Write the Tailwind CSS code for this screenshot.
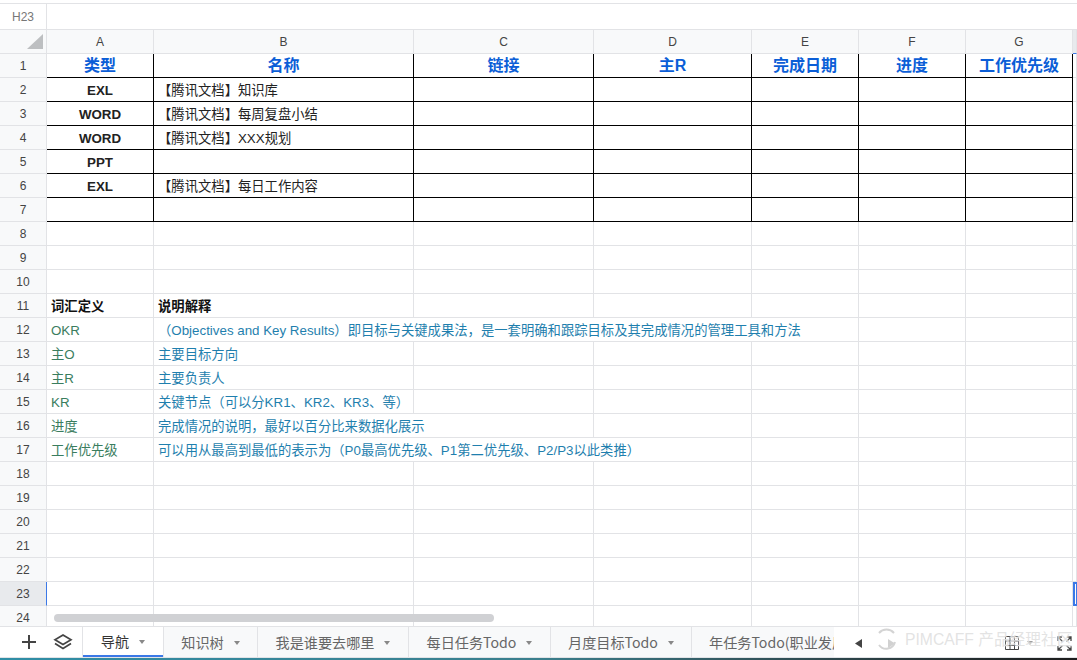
<!DOCTYPE html>
<html lang="zh">
<head>
<meta charset="utf-8">
<title>导航</title>
<script src="https://cdn.jsdelivr.net/npm/@tailwindcss/browser@4"></script>
</head>
<body class="bg-white">
<div class="relative w-[1077px] h-[660px] overflow-hidden flex flex-col text-[13.33px] text-[#222] font-['Liberation_Sans','Noto_Sans_CJK_SC',sans-serif]">
  <div class="h-[4px] shrink-0 border-b border-[#e2e3e6]"></div>
  <div class="h-[26px] shrink-0 flex border-b border-[#e2e3e6]">
    <div class="w-[47px] border-r border-[#e2e3e6] flex items-center justify-center text-[12px] text-[#777]">H23</div>
  </div>
  <div class="flex-1 min-h-0 overflow-hidden">
    <table class="table-fixed w-[1077px] border-separate border-spacing-0 [&_td]:h-[24px] [&_td]:pt-[2px] [&_td]:pb-0 [&_td]:leading-[20px] [&_td]:border-r [&_td]:border-b [&_td]:border-[#e2e3e6] [&_td]:whitespace-nowrap [&_td]:overflow-hidden">
      <colgroup>
        <col class="w-[47px]"><col class="w-[107px]"><col class="w-[260px]"><col class="w-[180px]"><col class="w-[158px]"><col class="w-[107px]"><col class="w-[107px]"><col class="w-[107px]"><col class="w-[4px]">
      </colgroup>
      <tbody class="[&_td:first-child]:pt-0 [&_td:first-child]:bg-[#f8f9fa] [&_td:first-child]:text-center [&_td:first-child]:text-[12px] [&_td:first-child]:text-[#444]">
        <tr class="bg-[#f8f9fa] text-center text-[12px] text-[#444] [&>td]:pt-0!">
          <td>
            <svg width="46" height="23" viewBox="0 0 46 23" class="block"><polygon points="43,4 43,19 27,19" fill="#bdbfc1"/></svg>
          </td>
          <td>A</td><td>B</td><td>C</td><td>D</td><td>E</td><td>F</td><td>G</td>
          <td class="bg-[#e8eaed] [border-bottom-color:#3b78e7]!"></td>
        </tr>
        <tr class="[&>td:not(:first-child,:last-child)]:border-black text-center text-[16px] font-bold text-[#0b5ed7] [&>td]:pt-0!">
          <td class="font-normal">1</td><td>类型</td><td>名称</td><td>链接</td><td>主R</td><td>完成日期</td><td>进度</td><td>工作优先级</td><td></td>
        </tr>
        <tr class="[&>td:not(:first-child,:last-child)]:border-black">
          <td>2</td><td class="text-center font-bold">EXL</td><td class="pl-[4px]">【腾讯文档】知识库</td><td></td><td></td><td></td><td></td><td></td><td></td>
        </tr>
        <tr class="[&>td:not(:first-child,:last-child)]:border-black">
          <td>3</td><td class="text-center font-bold">WORD</td><td class="pl-[4px]">【腾讯文档】每周复盘小结</td><td></td><td></td><td></td><td></td><td></td><td></td>
        </tr>
        <tr class="[&>td:not(:first-child,:last-child)]:border-black">
          <td>4</td><td class="text-center font-bold">WORD</td><td class="pl-[4px]">【腾讯文档】XXX规划</td><td></td><td></td><td></td><td></td><td></td><td></td>
        </tr>
        <tr class="[&>td:not(:first-child,:last-child)]:border-black">
          <td>5</td><td class="text-center font-bold">PPT</td><td></td><td></td><td></td><td></td><td></td><td></td><td></td>
        </tr>
        <tr class="[&>td:not(:first-child,:last-child)]:border-black">
          <td>6</td><td class="text-center font-bold">EXL</td><td class="pl-[4px]">【腾讯文档】每日工作内容</td><td></td><td></td><td></td><td></td><td></td><td></td>
        </tr>
        <tr class="[&>td:not(:first-child,:last-child)]:border-black">
          <td>7</td><td></td><td></td><td></td><td></td><td></td><td></td><td></td><td></td>
        </tr>
        <tr><td>8</td><td></td><td></td><td></td><td></td><td></td><td></td><td></td><td></td></tr>
        <tr><td>9</td><td></td><td></td><td></td><td></td><td></td><td></td><td></td><td></td></tr>
        <tr><td>10</td><td></td><td></td><td></td><td></td><td></td><td></td><td></td><td></td></tr>
        <tr class="font-bold text-[#111]">
          <td class="font-normal">11</td><td class="pl-[4px]">词汇定义</td><td class="pl-[4px]">说明解释</td><td></td><td></td><td></td><td></td><td></td><td></td>
        </tr>
        <tr>
          <td>12</td><td class="pl-[4px] text-[#3a7d5e]">OKR</td><td colspan="4" class="pl-[4px] text-[#1f7fae]">（Objectives and Key Results）即目标与关键成果法，是一套明确和跟踪目标及其完成情况的管理工具和方法</td><td></td><td></td><td></td>
        </tr>
        <tr>
          <td>13</td><td class="pl-[4px] text-[#3a7d5e]">主O</td><td class="pl-[4px] text-[#1f7fae]">主要目标方向</td><td></td><td></td><td></td><td></td><td></td><td></td>
        </tr>
        <tr>
          <td>14</td><td class="pl-[4px] text-[#3a7d5e]">主R</td><td class="pl-[4px] text-[#1f7fae]">主要负责人</td><td></td><td></td><td></td><td></td><td></td><td></td>
        </tr>
        <tr>
          <td>15</td><td class="pl-[4px] text-[#3a7d5e]">KR</td><td class="pl-[4px] text-[#1f7fae]">关键节点（可以分KR1、KR2、KR3、等）</td><td></td><td></td><td></td><td></td><td></td><td></td>
        </tr>
        <tr>
          <td>16</td><td class="pl-[4px] text-[#3a7d5e]">进度</td><td colspan="2" class="pl-[4px] text-[#1f7fae]">完成情况的说明，最好以百分比来数据化展示</td><td></td><td></td><td></td><td></td><td></td>
        </tr>
        <tr>
          <td>17</td><td class="pl-[4px] text-[#3a7d5e]">工作优先级</td><td colspan="3" class="pl-[4px] text-[#1f7fae]">可以用从最高到最低的表示为（P0最高优先级、P1第二优先级、P2/P3以此类推）</td><td></td><td></td><td></td><td></td>
        </tr>
        <tr><td>18</td><td></td><td></td><td></td><td></td><td></td><td></td><td></td><td></td></tr>
        <tr><td>19</td><td></td><td></td><td></td><td></td><td></td><td></td><td></td><td></td></tr>
        <tr><td>20</td><td></td><td></td><td></td><td></td><td></td><td></td><td></td><td></td></tr>
        <tr><td>21</td><td></td><td></td><td></td><td></td><td></td><td></td><td></td><td></td></tr>
        <tr><td>22</td><td></td><td></td><td></td><td></td><td></td><td></td><td></td><td></td></tr>
        <tr>
          <td class="bg-[#e8eaed]! [border-right-color:#3b78e7]!">23</td><td></td><td></td><td></td><td></td><td></td><td></td><td></td>
          <td class="border-[#3b78e7]! border-l-2! border-t-2! border-b-2!"></td>
        </tr>
        <tr><td>24</td><td></td><td></td><td></td><td></td><td></td><td></td><td></td><td></td></tr>
      </tbody>
    </table>
  </div>

  <div class="h-[32px] shrink-0 flex border-t border-b border-[#e2e3e6] bg-[#f8f9fa] text-[14.15px] text-[#666] font-['Noto_Sans_CJK_SC','Liberation_Sans',sans-serif]">
    <div class="w-[83px] shrink-0 bg-white border-r border-[#e2e3e6] flex items-center">
      <svg width="16" height="16" viewBox="0 0 16 16" class="ml-[21px]"><path d="M8 1v14M1 8h14" stroke="#444" stroke-width="2"/></svg>
      <svg width="20" height="18" viewBox="0 0 20 18" class="ml-[16px]"><path d="M10 2l8 4.800-8 4.800-8-4.800z" fill="none" stroke="#444" stroke-width="1.700"/><path d="M2 10.500l8 5 8-5" fill="none" stroke="#444" stroke-width="1.700"/></svg>
    </div>
    <div class="w-[80px] shrink-0 pt-[2px] bg-white border-b-2 border-b-[#3b78e7] flex items-center justify-center gap-[10px] text-[#333]">导航<svg width="6" height="4" viewBox="0 0 6 4"><path d="M0 0h6L3 4z" fill="#888"/></svg></div>
    <div class="w-[94px] shrink-0 pt-[2px] border-l border-[#e2e3e6] flex items-center justify-center gap-[10px]">知识树<svg width="6" height="4" viewBox="0 0 6 4"><path d="M0 0h6L3 4z" fill="#888"/></svg></div>
    <div class="w-[151px] shrink-0 pt-[2px] border-l border-[#e2e3e6] flex items-center justify-center gap-[10px]">我是谁要去哪里<svg width="6" height="4" viewBox="0 0 6 4"><path d="M0 0h6L3 4z" fill="#888"/></svg></div>
    <div class="w-[142px] shrink-0 pt-[2px] border-l border-[#e2e3e6] flex items-center justify-center gap-[10px]">每日任务Todo<svg width="6" height="4" viewBox="0 0 6 4"><path d="M0 0h6L3 4z" fill="#888"/></svg></div>
    <div class="w-[141px] shrink-0 pt-[2px] border-l border-[#e2e3e6] flex items-center justify-center gap-[10px]">月度目标Todo<svg width="6" height="4" viewBox="0 0 6 4"><path d="M0 0h6L3 4z" fill="#888"/></svg></div>
    <div class="w-[143px] shrink-0 pt-[2px] border-l border-[#e2e3e6] flex items-center pl-[17px] overflow-hidden whitespace-nowrap">年任务Todo(职业发展)</div>
    <div class="flex-1 bg-white flex items-center pt-[2px]">
      <svg width="7" height="9" viewBox="0 0 7 9" class="ml-[21px]"><path d="M7 0v9L0 4.500z" fill="#444"/></svg>
      <svg width="7" height="9" viewBox="0 0 7 9" class="ml-[26px]"><path d="M0 0v9l7-4.500z" fill="#666"/></svg>
      <svg width="14" height="14" viewBox="0 0 14 14" class="ml-[110px]"><path d="M.5.5h13v13H.5zM.5 5h13M.5 9.500h13M5 .5v13M9.500.5v13" fill="none" stroke="#444"/></svg>
      <svg width="6" height="4" viewBox="0 0 6 4" class="ml-[8px]"><path d="M0 0h6L3 4z" fill="#888"/></svg>
      <svg width="15" height="15" viewBox="0 0 15 15" class="ml-[24px]"><path d="M1 5V1h4M14 5V1h-4M1 10v4h4M14 10v4h-4M1.500 1.500l4 4M13.500 1.500l-4 4M1.500 13.500l4-4M13.500 13.500l-4-4" fill="none" stroke="#444" stroke-width="1.300"/></svg>
    </div>
  </div>
  <div class="h-[2px] shrink-0 bg-linear-to-r from-[#2f8ea6] via-[#3b7f8d] to-[#1c1c1c]"></div>

  <div class="absolute left-[54px] top-[614px] w-[440px] h-[8px] rounded-full bg-[#d0d1d4]"></div>
  <div class="absolute left-[875px] top-[628px] flex items-center gap-[7px] text-[15.700px] text-[#dcdcdc]/80 whitespace-nowrap [text-shadow:0_0_2px_#fff] font-['Liberation_Sans','Noto_Sans_CJK_SC',sans-serif]">
    <svg width="23" height="23" viewBox="0 0 23 23"><circle cx="11.500" cy="11.500" r="9.500" fill="#fff" fill-opacity="0.700"/><path d="M4 5a10 10 0 0 1 15 0M20 14a9 9 0 0 1-16 3" fill="none" stroke="#d4d4d4" stroke-width="2"/></svg>
    <span>PIMCAFF 产品经理社区</span>
  </div>
</div>
</body>
</html>
